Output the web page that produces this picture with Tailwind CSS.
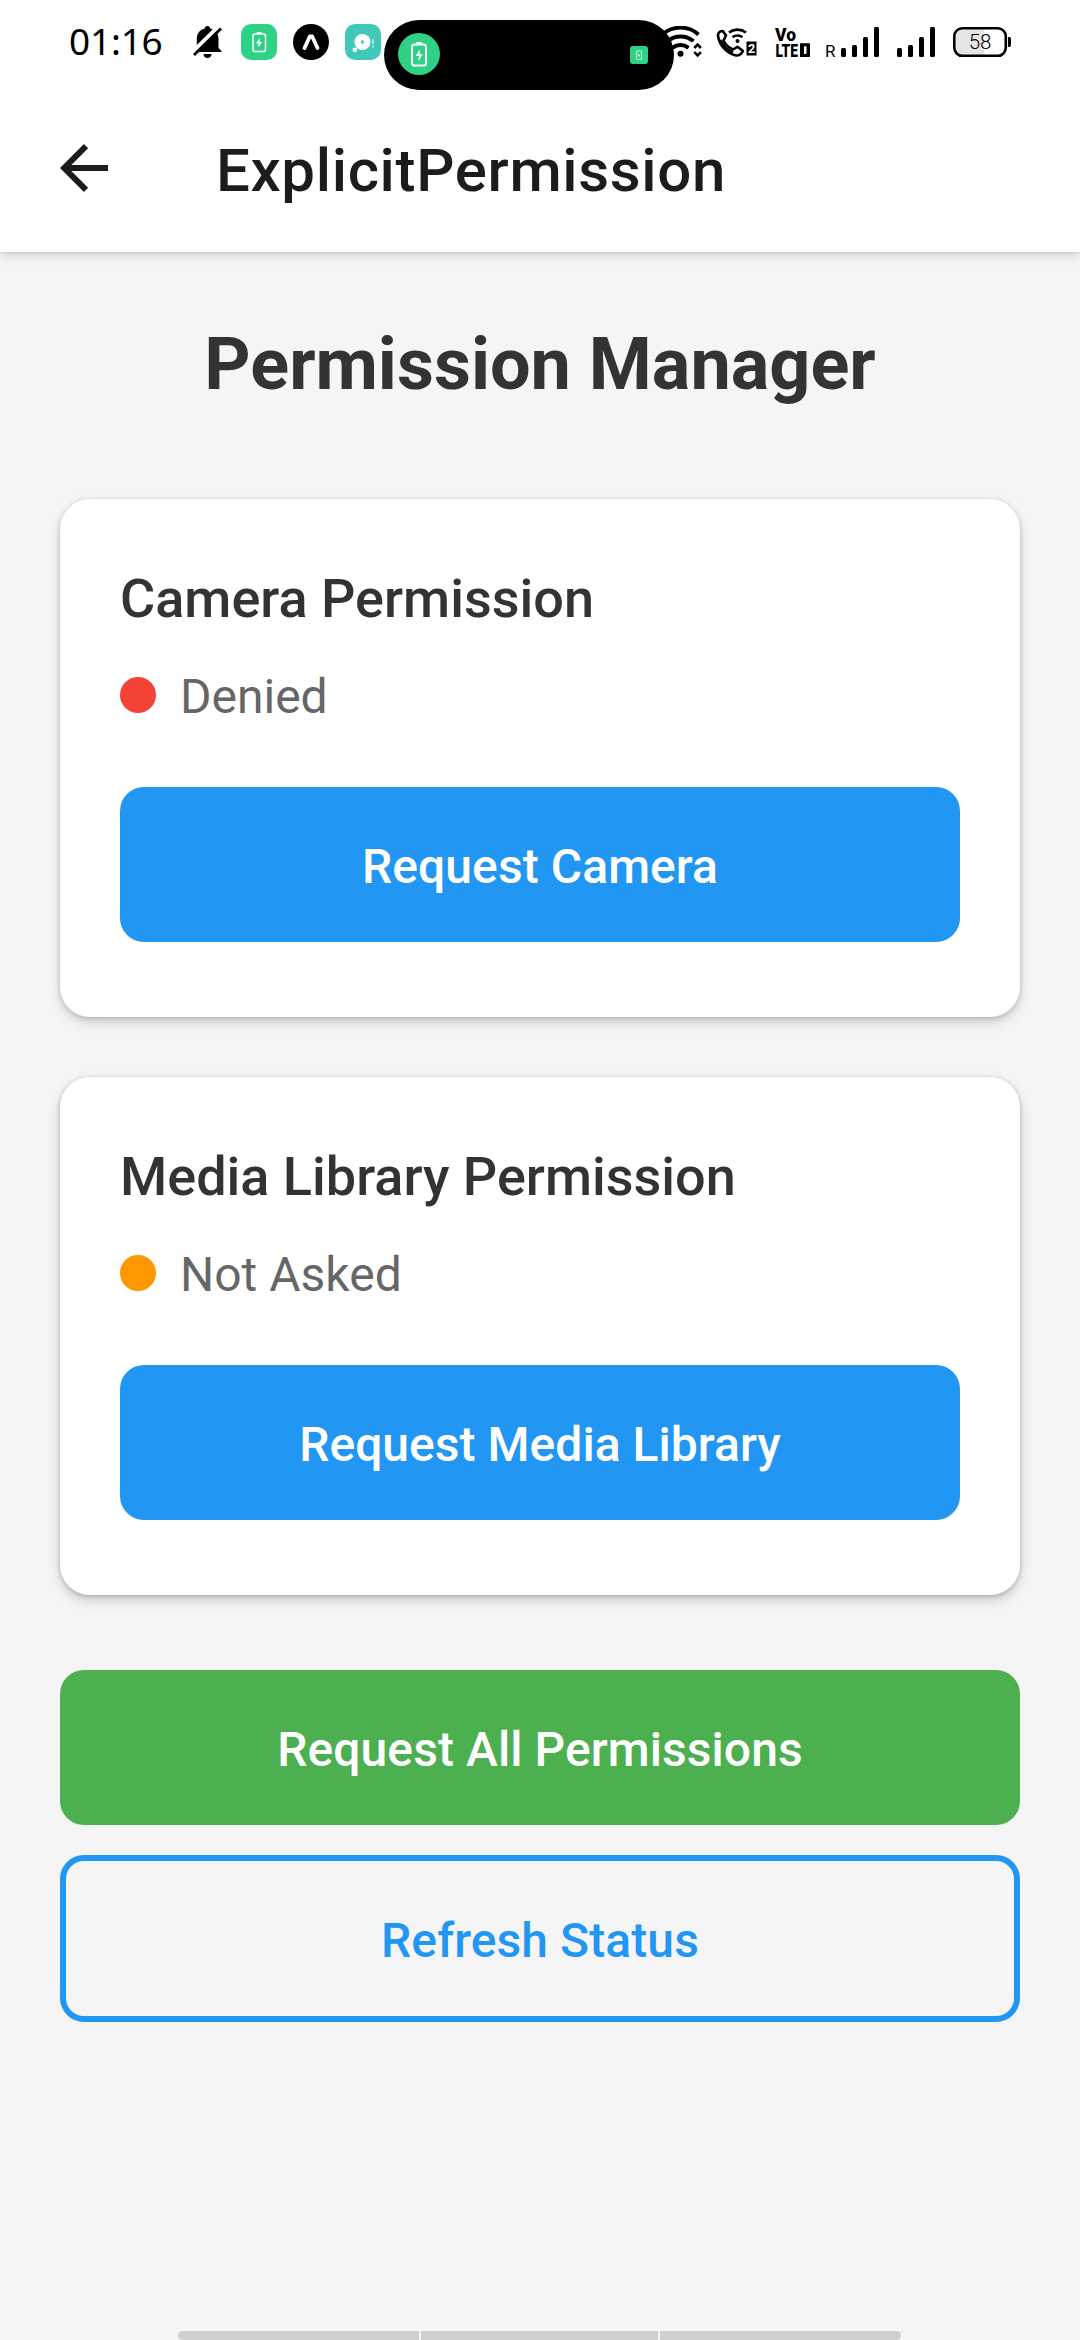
<!DOCTYPE html>
<html lang="en">
<head>
<meta charset="utf-8">
<title>ExplicitPermission</title>
<script src="https://cdn.jsdelivr.net/npm/@tailwindcss/browser@4"></script>
</head>
<body class="bg-[#f5f5f5]">
<div class="relative flex h-[2340px] w-[1080px] flex-col overflow-hidden bg-[#f5f5f5] font-['Roboto',sans-serif]">

  <header class="z-10 h-[252px] shrink-0 bg-white shadow-[0_3px_10px_rgba(0,0,0,0.16),0_0_3px_rgba(0,0,0,0.12)]">
    <!-- Status bar -->
    <div class="flex h-[84px] items-center justify-between pr-[69px] pl-[69px]">
      <div class="flex items-center">
        <span class="w-[124px] -translate-y-[2px] font-['Noto_Sans',sans-serif] text-[37px] leading-none font-[370] tracking-[-0.2px] text-black">01:16</span>
        <svg class="mr-[19px]" width="29" height="36" viewBox="0 0 29 36">
          <path d="M14.5 2c1.800 0 2.600 1 2.600 2.400C22 5.500 25.500 9 25.500 15v9l3 3v1H.8v-1l3-3v-9c0-6 3.300-9.500 8.100-10.600C11.900 3 12.700 2 14.500 2z"/>
          <path d="M10.500 30h8c0 2.500-1.800 4-4 4s-4-1.500-4-4z"/>
          <path d="M-1 28.500L25.500 2.500" stroke="#fff" stroke-width="4"/>
          <path d="M1 31L28 4.500" stroke="#000" stroke-width="2.800"/>
        </svg>
        <svg class="mr-4" width="36" height="36" viewBox="0 0 36 36">
          <rect width="36" height="36" rx="10" fill="#2dd284"/>
          <rect x="12" y="10" width="12.500" height="17.500" rx="2" fill="none" stroke="#fff" stroke-width="1.500"/>
          <rect x="15.500" y="8" width="5.500" height="2" rx="1" fill="#fff"/>
          <path d="M18.800 14L14.800 19.500h2.800L17.200 23.500l4-5.500h-2.800z" fill="#fff"/>
        </svg>
        <svg class="mr-4" width="36" height="36" viewBox="0 0 36 36">
          <circle cx="18" cy="18" r="18"/>
          <path d="M11.500 24L16.800 12.500h2.400L24.500 24" fill="none" stroke="#fff" stroke-width="3.800" stroke-linecap="round" stroke-linejoin="round"/>
        </svg>
        <svg width="36" height="36" viewBox="0 0 36 36">
          <rect width="36" height="36" rx="10" fill="#40c9b8"/>
          <circle cx="17.500" cy="18" r="8" fill="#fff"/><circle cx="17.500" cy="18" r="1.700" fill="#40c9b8"/>
          <circle cx="9.800" cy="25.800" r="2.400" fill="#fff"/>
          <path d="M28 15v5M28 21.500v2" stroke="#bdf0e8" stroke-width="1.600"/>
        </svg>
      </div>

      <div class="flex items-center">
        <svg class="mr-3.5" width="42" height="32" viewBox="0 0 42 32">
          <g fill="none" stroke="#000" stroke-width="4">
            <path d="M2.500 8.500a27 27 0 0 1 36 0"/><path d="M7.500 15.300a20 20 0 0 1 26 0"/><path d="M12.500 21.800a13 13 0 0 1 16 0"/>
          </g>
          <circle cx="20.500" cy="27.800" r="3"/>
          <path d="M31.500 16h10v16h-8v-10z" fill="#fff"/>
          <path d="M34.300 22l3.300-3.300 3.300 3.300M34.300 26.200l3.300 3.300 3.300-3.300" fill="none" stroke="#000" stroke-width="2.600"/>
        </svg>
        <svg class="mr-[18px]" width="41" height="32" viewBox="0 0 41 32">
          <path d="M2 9.500C2 6.500 4.500 5 6.800 5L10 9.500 7.500 14.500C9.500 18.500 12.500 21.500 17 23.500L21.500 20.800 27 25C25.500 28 23 29.700 20 29.500 10.500 27 3 19 2 9.500z" fill="none" stroke="#000" stroke-width="2.600" stroke-linejoin="round"/>
          <path d="M4.500 14C7 19.500 11 24 17 26.300" fill="none" stroke="#000" stroke-width="2.800"/>
          <path d="M13 6.500a14 14 0 0 1 17 0M16.500 11.200a9 9 0 0 1 10 0" fill="none" stroke="#000" stroke-width="2.600"/>
          <circle cx="21.500" cy="15" r="2"/>
          <rect x="30.500" y="15.500" width="10" height="14"/>
          <text x="35.500" y="27" text-anchor="middle" font-family="Roboto" font-size="12.500" font-weight="700" fill="#fff">2</text>
        </svg>
        <svg class="mr-[15px] overflow-visible" width="35" height="32" viewBox="0 0 35 32" font-family="Roboto" font-weight="900">
          <text x="0" y="15" font-size="18.500" textLength="21" lengthAdjust="spacingAndGlyphs">Vo</text>
          <text x="0.500" y="31" font-size="19" textLength="22.500" lengthAdjust="spacingAndGlyphs">LTE</text>
          <path d="M25 17.300h9q1 0 1 1v12.700H25z"/><path d="M29 20.300h1.500q1 0 1 1v5.500q0 1.200-1 1.200H29z" fill="#fff"/>
        </svg>
        <span class="mr-[6px] w-[10px] pt-[19px] text-[17px] leading-none text-black">R</span>
        <svg class="mr-[18px]" width="38" height="32" viewBox="0 0 38 32">
          <rect y="22" width="5" height="9" rx="1.500"/><rect x="11" y="19" width="5" height="12" rx="1.500"/><rect x="22" y="11" width="5" height="20" rx="1.500"/><rect x="33" y="1" width="5" height="30" rx="1.500"/>
        </svg>
        <svg class="mr-[18px]" width="38" height="32" viewBox="0 0 38 32">
          <rect y="22" width="5" height="9" rx="1.500"/><rect x="11" y="19" width="5" height="12" rx="1.500"/><rect x="22" y="11" width="5" height="20" rx="1.500"/><rect x="33" y="1" width="5" height="30" rx="1.500"/>
        </svg>
        <svg width="58" height="32" viewBox="0 0 58 32">
          <path d="M9 3h22v26H9q-6 0-6-6V9q0-6 6-6z" fill="#e5e5e5"/>
          <rect x="1.300" y="2.300" width="51.500" height="27.500" rx="8" fill="none" stroke="#000" stroke-width="2.600"/>
          <path d="M55 11h1q2 0 2 2v6q0 2-2 2h-1z"/>
          <text x="27" y="23" text-anchor="middle" font-family="Roboto" font-weight="300" font-size="20.500">58</text>
        </svg>
      </div>
    </div>

    <!-- Dynamic notification capsule -->
    <div class="absolute top-5 left-[384px] flex h-[70px] w-[290px] items-center justify-between rounded-full bg-black pr-[26px] pl-3.5">
      <svg class="-mt-0.5" width="42" height="42" viewBox="0 0 42 42">
        <circle cx="21" cy="21" r="21" fill="#2dd284"/>
        <rect x="14" y="11.500" width="14" height="21" rx="2.500" fill="none" stroke="#fff" stroke-width="2"/>
        <rect x="18" y="9" width="6" height="2.500" rx="1" fill="#fff"/>
        <path d="M22.300 16L17.500 23H21L20.200 28.500l4.500-7.500h-3.300z" fill="#fff"/>
      </svg>
      <svg width="18" height="18" viewBox="0 0 18 18">
        <rect width="18" height="18" rx="3" fill="#2dd284"/>
        <rect x="6.500" y="4.800" width="5" height="8.700" rx=".8" fill="none" stroke="#e8fff3" stroke-width=".9"/>
        <path d="M8.800 7l-1 2.500h1l.2 2 1.200-2.500h-1z" fill="#fff"/>
      </svg>
    </div>

    <!-- App bar -->
    <div class="flex h-[168px] items-center pl-[60px]">
      <svg width="48" height="48" viewBox="0 0 48 48" fill="none" stroke="#1c1c1e" stroke-width="6">
        <path d="M48 24H7M26 2.200L4.200 24 26 45.800"/>
      </svg>
      <h1 class="ml-[108px] pt-[5px] text-[60px] leading-none font-medium tracking-[0.65px] text-[#1c1c1e]">ExplicitPermission</h1>
    </div>
  </header>

  <main class="flex flex-col px-[60px] pt-[60px]">
    <h2 class="h-[187px] pt-[11px] text-center text-[72px] leading-[84px] font-bold text-[#333]">Permission Manager</h2>

    <section class="mb-[60px] h-[518px] rounded-[30px] bg-white p-[60px] shadow-[0_5px_12px_rgba(0,0,0,0.17),0_1px_4px_rgba(0,0,0,0.16)]">
      <h3 class="mb-[30px] h-[73px] pt-[8px] text-[54px] leading-[63px] font-medium text-[#333]">Camera Permission</h3>
      <div class="mb-[60px] flex h-[65px] items-center gap-6">
        <span class="size-9 rounded-full bg-[#f44336]"></span>
        <span class="pt-[4px] text-[48px] leading-[56px] text-[#666]">Denied</span>
      </div>
      <button class="block h-[155px] w-full rounded-3xl bg-[#2196f3] pt-[5px] text-[48px] leading-[56px] font-medium tracking-[0.08px] text-white">Request Camera</button>
    </section>

    <section class="mb-[75px] h-[518px] rounded-[30px] bg-white p-[60px] shadow-[0_5px_12px_rgba(0,0,0,0.19),0_1px_4px_rgba(0,0,0,0.18)]">
      <h3 class="mb-[30px] h-[73px] pt-[8px] text-[54px] leading-[63px] font-medium text-[#333]">Media Library Permission</h3>
      <div class="mb-[60px] flex h-[65px] items-center gap-6">
        <span class="size-9 rounded-full bg-[#ff9800]"></span>
        <span class="pt-[4px] text-[48px] leading-[56px] text-[#666]">Not Asked</span>
      </div>
      <button class="block h-[155px] w-full rounded-3xl bg-[#2196f3] pt-[5px] text-[48px] leading-[56px] font-medium tracking-[0.04px] text-white">Request Media Library</button>
    </section>

    <button class="mb-[30px] h-[155px] rounded-3xl bg-[#4caf50] pt-[5px] text-[48px] leading-[56px] font-medium tracking-[0.08px] text-white">Request All Permissions</button>
    <button class="h-[167px] rounded-3xl border-6 border-[#2196f3] pt-[5px] text-[48px] leading-[56px] font-medium tracking-[0.08px] text-[#2196f3]">Refresh Status</button>
  </main>

  <!-- Gesture bar -->
  <div class="mt-auto ml-[178px] flex h-[9px] w-[723px] gap-0.5 overflow-hidden rounded-[5px]">
    <div class="w-[241px] bg-[#cfcfcf]"></div>
    <div class="w-[237px] bg-[#cfcfcf]"></div>
    <div class="flex-1 bg-[#cfcfcf]"></div>
  </div>
</div>
</body>
</html>
